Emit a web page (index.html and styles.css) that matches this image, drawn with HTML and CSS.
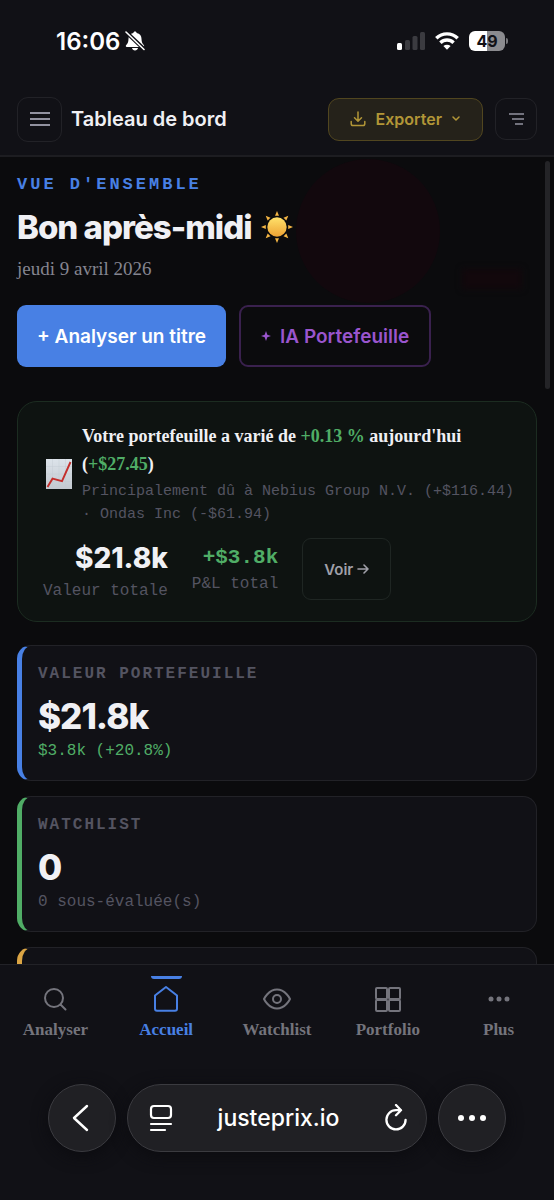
FILE: index.html
```
<!DOCTYPE html>
<html lang="fr">
<head>
<meta charset="utf-8">
<meta name="viewport" content="width=device-width, initial-scale=1">
<title>Tableau de bord</title>
<link rel="stylesheet" href="styles.css">
</head>
<body>
<div class="app">
  <div class="status">
    <div class="status-time">
      <span>16:06</span>
      <svg width="20" height="20" viewBox="0 0 20 20"><path fill="#fff" d="M10 .5c-.9 0-1.600.6-1.700 1.500C5.100 2.700 3.500 5 3.500 7.800c0 3.700-1 5-2.300 6.200-.8.800-.4 1.900.6 1.900h16.400c1 0 1.400-1.100.6-1.900-1.300-1.200-2.300-2.500-2.300-6.200 0-2.800-1.600-5.100-4.800-5.800C11.600 1.100 10.900.5 10 .5zM7 17h6c-.3 1.500-1.500 2.500-3 2.500S7.300 18.500 7 17z"/><path stroke="#111116" stroke-width="4" d="M.5.5l19 18"/><path stroke="#fff" stroke-width="1.600" stroke-linecap="round" d="M1 1l18 17.500"/></svg>
    </div>
    <div class="status-icons">
      <svg width="28" height="20" viewBox="0 0 28 20"><rect x="0" y="12" width="5" height="7" rx="1.500" fill="#fff"/><g fill="#3b3b40"><rect x="8" y="9" width="5" height="10" rx="1.500"/><rect x="15.500" y="5" width="5" height="14" rx="1.500"/><rect x="23" y="1" width="5" height="18" rx="1.500"/></g></svg>
      <svg width="24" height="18" viewBox="0 0 24 18"><g fill="none" stroke="#fff" stroke-width="3.400"><path d="M1.300 6.300a15.200 15.200 0 0 1 21.400 0"/><path d="M5.400 10.700a9.400 9.400 0 0 1 13.200 0"/></g><path fill="#fff" d="M12 17.800l-3.600-3.700a5.200 5.200 0 0 1 7.200 0z"/></svg>
      <div class="battery"><span>49</span></div>
    </div>
  </div>

  <header class="topbar">
    <button class="icon-btn" aria-label="Menu"><svg width="20" height="14" viewBox="0 0 20 14" stroke="#9292a0" stroke-width="1.800"><path d="M0 1h20M0 7h20M0 13h20"/></svg></button>
    <span class="topbar-title">Tableau de bord</span>
    <button class="export">
      <svg width="16" height="16" viewBox="0 0 16 16" fill="none" stroke="currentColor" stroke-width="1.500" stroke-linecap="round" stroke-linejoin="round"><path d="M8 1v9M4.500 6.800L8 10.200l3.500-3.400M1.200 10.500v2.300c0 1.100.7 1.800 1.800 1.800h10c1.100 0 1.800-.7 1.800-1.800v-2.300"/></svg>
      <span>Exporter</span>
      <svg width="8" height="6" viewBox="0 0 8 6" fill="none" stroke="currentColor" stroke-width="1.500" stroke-linecap="round" stroke-linejoin="round"><path d="M1 1l3 3 3-3"/></svg>
    </button>
    <button class="icon-btn icon-btn-small" aria-label="Filtres"><svg width="16" height="12" viewBox="0 0 16 12" stroke="#9292a0" stroke-width="1.600"><path d="M1 1h15M4 6h12M7 11h8"/></svg></button>
  </header>

  <main class="content">
    <div class="glow"></div>
    <div class="glow-small"></div>
    <div class="scroll-thumb"></div>
    <section class="hero">
      <p class="eyebrow">VUE D'ENSEMBLE</p>
      <h1><span>Bon après-midi</span>
        <svg width="32" height="32" viewBox="0 0 32 32" role="img" aria-label="Soleil"><defs><linearGradient id="sun" x1="0" y1="0" x2="0" y2="1"><stop offset="0" stop-color="#ffe26b"/><stop offset="1" stop-color="#eda233"/></linearGradient></defs><g fill="#f3b544"><path id="ray" d="M16 0l2 4.800h-4z"/><use href="#ray" transform="rotate(45 16 16)"/><use href="#ray" transform="rotate(90 16 16)"/><use href="#ray" transform="rotate(135 16 16)"/><use href="#ray" transform="rotate(180 16 16)"/><use href="#ray" transform="rotate(225 16 16)"/><use href="#ray" transform="rotate(270 16 16)"/><use href="#ray" transform="rotate(315 16 16)"/></g><circle cx="16" cy="16" r="9.700" fill="url(#sun)"/></svg>
      </h1>
      <p class="date">jeudi 9 avril 2026</p>
      <div class="actions">
        <button class="btn btn-primary">+ Analyser un titre</button>
        <button class="btn btn-ai"><svg width="10" height="10" viewBox="0 0 10 10" fill="currentColor"><path d="M5 0l1.300 3.700L10 5 6.300 6.300 5 10 3.700 6.300 0 5l3.700-1.300z"/></svg><span>IA Portefeuille</span></button>
      </div>
    </section>

    <section class="summary">
      <div class="news">
        <svg width="26" height="30" viewBox="0 0 26 30" role="img" aria-label="Graphique en hausse"><defs><linearGradient id="sheet" x1="0" y1="0" x2="0" y2="1"><stop offset="0" stop-color="#dce3ea"/><stop offset="1" stop-color="#c3c9d0"/></linearGradient></defs><path fill="url(#sheet)" d="M0 0h26v30H0z"/><path stroke="#c2cad2" stroke-width=".4" d="M0 7.500h26M0 15h26M0 22.500h26M6.500 0v30M13 0v30M19.500 0v30"/><path fill="none" stroke="#c42f2c" stroke-width="1.900" d="M1.500 28l5-8.300 9.500 2.500L24.500 3"/></svg>
        <div>
          <p class="news-title">Votre portefeuille a varié de <span class="up">+0.13 %</span> aujourd'hui (<span class="up">+$27.45</span>)</p>
          <p class="news-sub">Principalement dû à Nebius Group N.V. (+$116.44) · Ondas Inc (-$61.94)</p>
        </div>
      </div>
      <div class="stats">
        <div class="stat"><strong class="stat-main">$21.8k</strong><span>Valeur totale</span></div>
        <div class="stat"><strong class="stat-gain">+$3.8k</strong><span>P&amp;L total</span></div>
        <button class="see">Voir <svg width="12" height="10" viewBox="0 0 12 10" fill="none" stroke="currentColor" stroke-width="1.600" stroke-linecap="round" stroke-linejoin="round"><path d="M1 5h10M7 1l4 4-4 4"/></svg></button>
      </div>
    </section>

    <section class="cards">
      <article class="card card-blue"><h2>VALEUR PORTEFEUILLE</h2><strong>$21.8k</strong><p class="up">$3.8k (+20.8%)</p></article>
      <article class="card card-green"><h2>WATCHLIST</h2><strong>0</strong><p>0 sous-évaluée(s)</p></article>
      <article class="card card-amber"></article>
    </section>
  </main>

  <nav class="tabs">
    <a href="#analyser"><svg width="28" height="28" viewBox="0 0 28 28"><circle cx="13" cy="13" r="9"/><path d="M19.500 19.500l5 5"/></svg>Analyser</a>
    <a href="#accueil" class="active"><svg width="28" height="28" viewBox="0 0 28 28"><path d="M14 2l11 8.500v13.300c0 1.200-.8 2-2 2H5c-1.200 0-2-.8-2-2V10.500z"/></svg>Accueil</a>
    <a href="#watchlist"><svg width="28" height="28" viewBox="0 0 28 28"><path d="M1 14s4.500-9.500 13-9.500S27 14 27 14s-4.500 9.500-13 9.500S1 14 1 14z"/><circle cx="14" cy="14" r="4"/></svg>Watchlist</a>
    <a href="#portfolio"><svg width="28" height="28" viewBox="0 0 28 28"><rect x="2" y="3" width="11" height="11" rx="1"/><rect x="15" y="3" width="11" height="11" rx="1"/><rect x="2" y="15" width="11" height="11" rx="1"/><rect x="15" y="15" width="11" height="11" rx="1"/></svg>Portfolio</a>
    <a href="#plus"><svg width="28" height="28" viewBox="0 0 28 28"><g fill="currentColor" stroke="none"><circle cx="6" cy="14" r="2.500"/><circle cx="14" cy="14" r="2.500"/><circle cx="22" cy="14" r="2.500"/></g></svg>Plus</a>
  </nav>

  <footer class="browser">
    <button class="round" aria-label="Retour"><svg width="20" height="28" viewBox="0 0 20 28" fill="none" stroke="#fff" stroke-width="2.400" stroke-linecap="round" stroke-linejoin="round"><path d="M15 2L2 14l13 12"/></svg></button>
    <div class="address">
      <button aria-label="Page"><svg width="24" height="28" viewBox="0 0 24 28" fill="none" stroke="#fff" stroke-width="2.200" stroke-linecap="round"><rect x="2" y="2" width="20" height="12" rx="3"/><path d="M2 20h20M2 26h14"/></svg></button>
      <span>justeprix.io</span>
      <button aria-label="Actualiser"><svg width="24" height="28" viewBox="0 0 24 28" fill="none" stroke="#fff" stroke-width="2.300" stroke-linecap="round" stroke-linejoin="round"><path d="M17 6.200h-5a9.600 9.600 0 1 0 9.600 9.600M12 1l5 5.200-5 5"/></svg></button>
    </div>
    <button class="round" aria-label="Plus d'options"><svg width="30" height="8" viewBox="0 0 30 8" fill="#fff"><circle cx="4" cy="4" r="3"/><circle cx="15" cy="4" r="3"/><circle cx="26" cy="4" r="3"/></svg></button>
  </footer>
</div>
</body>
</html>
```
FILE: styles.css
```
:root {
  --panel: #111116;
  --page: #0b0b0d;
  --line: #222227;
  --text: #f0f0f4;
  --muted: #545461;
  --blue: #4880e4;
  --green: #50ad66;
  --sans: Inter, "Liberation Sans", sans-serif;
  --serif: "Liberation Serif", serif;
  --mono: "Liberation Mono", monospace;
}

* { box-sizing: border-box; }

body, h1, h2, p { margin: 0; }

body {
  background: var(--panel);
  color: var(--text);
  font-family: var(--serif);
}

button {
  padding: 0;
  border: 0;
  background: none;
  color: inherit;
  font-family: var(--sans);
}

svg { display: block; flex: none; }

.app {
  display: flex;
  flex-direction: column;
  height: 100vh;
}

.status {
  display: flex;
  justify-content: space-between;
  padding: 24px 49px 0 56px;
  height: 83px;
  flex: none;
  font-family: var(--sans);
}

.status-time, .status-icons {
  display: flex;
  align-items: center;
  height: 34px;
}

.status-time { gap: 5px; color: #fff; font-size: 24px; font-weight: 600; }
.status-icons { gap: 10px; }

.battery {
  position: relative;
  width: 36px;
  height: 20px;
  border-radius: 6px;
  background: linear-gradient(90deg, #fff 50%, #8b8b8f 50%);
  color: #111116;
  font-size: 16px;
  font-weight: 700;
  line-height: 20px;
  text-align: center;
}

.battery::after {
  content: "";
  position: absolute;
  right: -3px;
  top: 7px;
  width: 2px;
  height: 6px;
  border-radius: 0 2px 2px 0;
  background: #77777b;
}

.topbar {
  display: flex;
  align-items: center;
  gap: 12px;
  flex: none;
  height: 74px;
  padding: 0 17px;
  border-bottom: 2px solid #1d1d21;
}

.icon-btn {
  display: grid;
  place-items: center;
  width: 45px;
  height: 45px;
  border: 1px solid var(--line);
  border-radius: 11px;
}

.icon-btn-small { width: 42px; height: 42px; }

.topbar-title {
  flex: 1;
  margin-left: -3px;
  font: 600 20px/28px var(--sans);
}

.export {
  display: flex;
  align-items: center;
  gap: 10px;
  height: 43px;
  padding: 0 22px 0 21px;
  border: 1px solid #51461f;
  border-radius: 11px;
  background: #25221a;
  color: #b29637;
  font-size: 16px;
  font-weight: 600;
}

.content {
  position: relative;
  flex: 1;
  min-height: 0;
  overflow: hidden;
  padding: 18px 17px 0;
  background: var(--page);
}

.glow, .glow-small, .scroll-thumb { position: absolute; }

.glow {
  top: 2px;
  left: 296px;
  width: 144px;
  height: 144px;
  border-radius: 50%;
  background: #12080d;
}

.glow-small {
  top: 112px;
  right: 32px;
  width: 60px;
  height: 20px;
  background: #12080c;
  filter: blur(3px);
}

.scroll-thumb {
  top: 4px;
  right: 4px;
  width: 5px;
  height: 228px;
  border-radius: 3px;
  background: #242427;
}

.hero { position: relative; }

.eyebrow {
  color: var(--blue);
  font: 700 17px/20px var(--mono);
  letter-spacing: 3px;
}

h1 {
  display: flex;
  align-items: center;
  gap: 9px;
  margin-top: 11px;
  font: 800 33px/42px var(--sans);
  letter-spacing: -1px;
}

.date {
  margin-top: 9px;
  color: #858590;
  font-size: 19px;
  line-height: 24px;
}

.actions { display: flex; gap: 13px; margin-top: 24px; }

.btn {
  display: flex;
  align-items: center;
  gap: 9px;
  height: 62px;
  padding: 0 20px;
  border-radius: 9px;
  font-size: 19px;
  font-weight: 600;
}

.btn-primary { background: var(--blue); color: #fff; }
.btn-ai { border: 2px solid #3a214e; color: #9a55cd; }

.summary {
  margin-top: 34px;
  padding: 20px 20px 18px 25px;
  border: 1px solid #1c2c21;
  border-radius: 20px;
  background: #0e1311;
}

.news { display: flex; align-items: center; gap: 10px; padding-left: 3px; }

.news-title { font-size: 18px; font-weight: 700; line-height: 28px; }

.up { color: var(--green); }

.news-sub {
  margin-top: 2px;
  color: var(--muted);
  font: 15px/23px var(--mono);
}

.stats { display: flex; align-items: center; gap: 24px; margin-top: 9px; }

.stat {
  display: flex;
  flex-direction: column;
  align-items: flex-end;
  padding-top: 2px;
  color: var(--muted);
  font: 16px/24px var(--mono);
}

.stat-main { color: var(--text); font: 800 28px/42px var(--sans); }
.stat-gain { color: var(--green); font-size: 21px; line-height: 28px; }

.see {
  display: flex;
  align-items: center;
  gap: 4px;
  height: 62px;
  padding: 0 21px;
  border: 1px solid #1f2623;
  border-radius: 9px;
  color: #a0a0a9;
  font-size: 15px;
  font-weight: 600;
}

.cards { display: grid; gap: 15px; margin-top: 23px; }

.card {
  min-height: 136px;
  padding: 16px 16px 18px;
  border: 1px solid var(--line);
  border-left-width: 5px;
  border-radius: 14px;
  background: var(--panel);
}

.card-blue { border-left-color: var(--blue); }
.card-green { border-left-color: var(--green); }
.card-amber { border-left-color: #dba544; }

.card h2 {
  color: var(--muted);
  font: 700 16px/24px var(--mono);
  letter-spacing: 2px;
}

.card strong {
  display: block;
  margin-top: 8px;
  font: 800 35px/44px var(--sans);
  letter-spacing: -1px;
}

.card p {
  margin-top: 2px;
  font: 16px/22px var(--mono);
}

.card p:not(.up) { color: var(--muted); }

.tabs {
  display: grid;
  grid-template-columns: repeat(5, 1fr);
  flex: none;
  height: 86px;
  border-top: 1px solid var(--line);
}

.tabs a {
  position: relative;
  display: flex;
  flex-direction: column;
  align-items: center;
  gap: 7px;
  padding-top: 20px;
  color: #74747c;
  font-size: 17px;
  font-weight: 700;
  line-height: 20px;
  text-decoration: none;
}

.tabs svg { fill: none; stroke: currentColor; stroke-width: 2; stroke-linecap: round; stroke-linejoin: round; }

.tabs .active { color: var(--blue); }

.tabs .active::before {
  content: "";
  position: absolute;
  top: 11px;
  width: 31px;
  height: 3px;
  border-radius: 0 0 3px 3px;
  background: var(--blue);
}

.browser {
  display: flex;
  justify-content: center;
  gap: 11px;
  flex: none;
  height: 150px;
  padding: 34px 48px 0;
}

.round, .address {
  height: 68px;
  border: 1px solid #3b3b40;
  border-radius: 34px;
  background: #202024;
  box-shadow: 0 4px 16px #0c0c10;
}

.round { display: grid; place-items: center; width: 68px; flex: none; }

.address {
  display: flex;
  flex: 1;
  align-items: center;
  justify-content: space-between;
  padding: 0 18px 0 21px;
  color: #fff;
  font: 500 23px/30px var(--sans);
}
```
